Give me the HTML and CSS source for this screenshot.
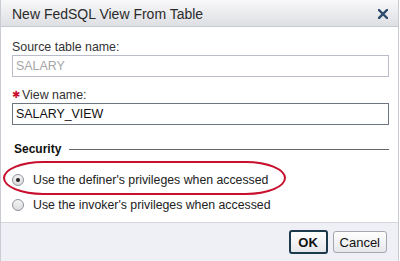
FILE: index.html
```html
<!DOCTYPE html>
<html lang="en">
<head>
    <meta charset="UTF-8">
    <title>New FedSQL View From Table</title>
    <link rel="stylesheet" href="styles.css">
</head>
<body>
    <div class="dialog">
        <div class="title-bar">
            <span class="title">New FedSQL View From Table</span>
            <svg class="close" width="10" height="10" viewBox="0 0 10 10">
                <path d="M1 1 L9 9 M9 1 L1 9" stroke="#2d4c6c" stroke-width="2.4" stroke-linecap="square"/>
            </svg>
        </div>

        <div class="content">
            <label class="field-label">Source table name:</label>
            <input class="field readonly" type="text" value="SALARY" readonly>

            <label class="field-label second"><span class="required">&#x2731;</span>View name:</label>
            <input class="field" type="text" value="SALARY_VIEW">

            <div class="section">
                <span class="section-title">Security</span>
                <span class="section-line"></span>
            </div>

            <div class="options">
                <div class="option">
                    <span class="radio checked"></span>
                    <span>Use the definer's privileges when accessed</span>
                </div>
                <div class="option">
                    <span class="radio"></span>
                    <span>Use the invoker's privileges when accessed</span>
                </div>
                <div class="highlight"></div>
            </div>
        </div>

        <div class="footer">
            <button class="btn btn-ok">OK</button>
            <button class="btn">Cancel</button>
        </div>
    </div>
</body>
</html>
```

FILE: styles.css
```css
body {
    margin: 0;
    padding: 0;
    font-family: "Liberation Sans", Arial, sans-serif;
    color: #222;
    background: #fff;
}

.dialog {
    width: 399px;
    height: 261px;
    box-sizing: border-box;
    border-left: 1px solid #c8cbd2;
    border-right: 1px solid #c8cbd2;
    display: flex;
    flex-direction: column;
}

.title-bar {
    height: 26px;
    border-bottom: 1px solid #c6c9cf;
    background: linear-gradient(#f8f8f9, #dedfe3);
    display: flex;
    align-items: center;
    justify-content: space-between;
    padding: 0 10px 0 11px;
}

.title {
    font-size: 14px;
    color: #2b2b2b;
    padding-top: 1px;
}

.close {
    margin-top: 1px;
}

.content {
    flex: 1;
    padding: 13px 9px 0 11px;
    background: #fff;
    border-bottom: 1px solid #d3d6dc;
}

.field-label {
    display: block;
    font-size: 12.4px;
    line-height: 15px;
    color: #333;
}

.field-label.second {
    margin-top: 10px;
}

.required {
    color: #c8102e;
    font-size: 10px;
    margin-right: 2px;
    vertical-align: 1px;
}

.field {
    display: block;
    width: 377px;
    height: 22px;
    box-sizing: border-box;
    margin: 0;
    padding: 0 3px;
    border: 1px solid #6d7580;
    font-family: "Liberation Sans", Arial, sans-serif;
    font-size: 12.4px;
    color: #111;
    outline: none;
}

.field.readonly {
    border-color: #b9bdc9;
    color: #a6a6a6;
}

.section {
    display: flex;
    align-items: center;
    margin-top: 17px;
    padding-left: 2px;
}

.section-title {
    font-size: 12px;
    font-weight: bold;
    line-height: 14px;
    color: #111;
}

.section-line {
    flex: 1;
    height: 1px;
    background: #666;
    margin: 1px 0 0 8px;
}

.options {
    position: relative;
    margin-top: 11px;
}

.option {
    display: flex;
    align-items: center;
    height: 25px;
    font-size: 12.3px;
    color: #222;
}

.radio {
    width: 10px;
    height: 10px;
    border: 1px solid #8e939b;
    border-radius: 50%;
    background: linear-gradient(#f4f4f4, #dcdcdc);
    margin-right: 9px;
    position: relative;
}

.radio.checked::after {
    content: "";
    position: absolute;
    left: 3px;
    top: 3px;
    width: 4px;
    height: 4px;
    border-radius: 50%;
    background: #222;
}

.highlight {
    position: absolute;
    left: -9px;
    top: -6px;
    width: 279px;
    height: 30px;
    border: 2px solid #c8102e;
    border-radius: 40px / 17px;
}

.footer {
    height: 38px;
    background: #eef0f5;
    display: flex;
    justify-content: flex-end;
    align-items: center;
    gap: 5px;
    padding-right: 11px;
}

.btn {
    height: 22px;
    box-sizing: border-box;
    padding: 0 6px;
    border: 1px solid #a3a7af;
    border-radius: 3px;
    background: linear-gradient(#ffffff, #e6e7eb);
    font-family: "Liberation Sans", Arial, sans-serif;
    font-size: 13px;
    color: #111;
}

.btn-ok {
    height: 24px;
    width: 39px;
    border: 2px solid #1d3a4d;
    font-weight: bold;
}
```
